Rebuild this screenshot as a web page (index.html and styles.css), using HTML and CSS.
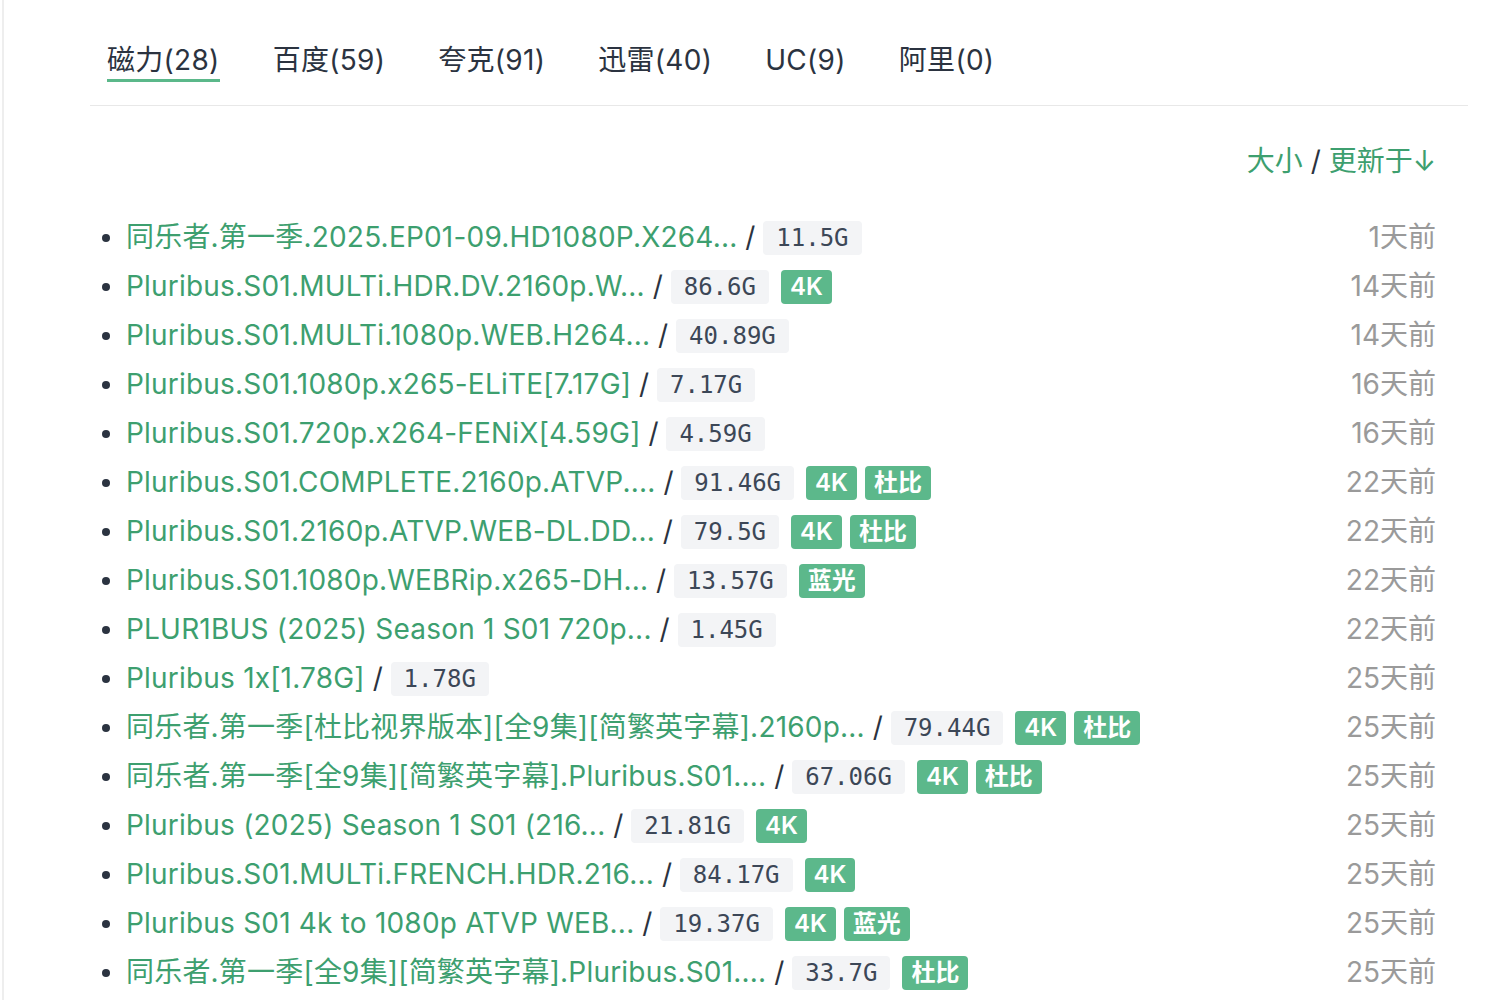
FILE: index.html
```html
<!DOCTYPE html>
<html lang="zh-CN">
<head>
    <meta charset="UTF-8">
    <meta name="viewport" content="width=device-width, initial-scale=1.0">
    <title>资源列表</title>
    <link rel="stylesheet" href="styles.css">
</head>
<body>

    <div class="panel">
        <!-- 网盘分类 -->
        <div class="tabs">
            <span class="tab active">磁力(28)</span>
            <span class="tab">百度(59)</span>
            <span class="tab">夸克(91)</span>
            <span class="tab">迅雷(40)</span>
            <span class="tab">UC(9)</span>
            <span class="tab">阿里(0)</span>
        </div>

        <div class="sort">
            <a href="#">大小</a> / <a href="#">更新于↓</a>
        </div>

        <ul class="list">
            <li><div class="info"><a href="#">同乐者.第一季.2025.EP01-09.HD1080P.X264...</a> / <span class="size">11.5G</span></div><span class="date">1天前</span></li>
            <li><div class="info"><a href="#">Pluribus.S01.MULTi.HDR.DV.2160p.W...</a> / <span class="size">86.6G</span><span class="tag">4K</span></div><span class="date">14天前</span></li>
            <li><div class="info"><a href="#">Pluribus.S01.MULTi.1080p.WEB.H264...</a> / <span class="size">40.89G</span></div><span class="date">14天前</span></li>
            <li><div class="info"><a href="#">Pluribus.S01.1080p.x265-ELiTE[7.17G]</a> / <span class="size">7.17G</span></div><span class="date">16天前</span></li>
            <li><div class="info"><a href="#">Pluribus.S01.720p.x264-FENiX[4.59G]</a> / <span class="size">4.59G</span></div><span class="date">16天前</span></li>
            <li><div class="info"><a href="#">Pluribus.S01.COMPLETE.2160p.ATVP....</a> / <span class="size">91.46G</span><span class="tag">4K</span><span class="tag">杜比</span></div><span class="date">22天前</span></li>
            <li><div class="info"><a href="#">Pluribus.S01.2160p.ATVP.WEB-DL.DD...</a> / <span class="size">79.5G</span><span class="tag">4K</span><span class="tag">杜比</span></div><span class="date">22天前</span></li>
            <li><div class="info"><a href="#">Pluribus.S01.1080p.WEBRip.x265-DH...</a> / <span class="size">13.57G</span><span class="tag">蓝光</span></div><span class="date">22天前</span></li>
            <li><div class="info"><a href="#">PLUR1BUS (2025) Season 1 S01 720p...</a> / <span class="size">1.45G</span></div><span class="date">22天前</span></li>
            <li><div class="info"><a href="#">Pluribus 1x[1.78G]</a> / <span class="size">1.78G</span></div><span class="date">25天前</span></li>
            <li><div class="info"><a href="#">同乐者.第一季[杜比视界版本][全9集][简繁英字幕].2160p...</a> / <span class="size">79.44G</span><span class="tag">4K</span><span class="tag">杜比</span></div><span class="date">25天前</span></li>
            <li><div class="info"><a href="#">同乐者.第一季[全9集][简繁英字幕].Pluribus.S01....</a> / <span class="size">67.06G</span><span class="tag">4K</span><span class="tag">杜比</span></div><span class="date">25天前</span></li>
            <li><div class="info"><a href="#">Pluribus (2025) Season 1 S01 (216...</a> / <span class="size">21.81G</span><span class="tag">4K</span></div><span class="date">25天前</span></li>
            <li><div class="info"><a href="#">Pluribus.S01.MULTi.FRENCH.HDR.216...</a> / <span class="size">84.17G</span><span class="tag">4K</span></div><span class="date">25天前</span></li>
            <li><div class="info"><a href="#">Pluribus S01 4k to 1080p ATVP WEB...</a> / <span class="size">19.37G</span><span class="tag">4K</span><span class="tag">蓝光</span></div><span class="date">25天前</span></li>
            <li><div class="info"><a href="#">同乐者.第一季[全9集][简繁英字幕].Pluribus.S01....</a> / <span class="size">33.7G</span><span class="tag">杜比</span></div><span class="date">25天前</span></li>
        </ul>
    </div>

</body>
</html>
```

FILE: styles.css
```css
body {
    margin: 0;
    background-color: #fff;
    font-family: Inter, "Noto Sans CJK SC", sans-serif;
    color: #2b3340;
}

.panel {
    margin-left: 2px;
    border-left: 2px solid #eeeeee;
    padding: 40px 32px 0 86px;
    height: 1000px;
    box-sizing: border-box;
    overflow: hidden;
}

.tabs {
    display: flex;
    gap: 53px;
    padding: 0 0 0 17px;
    height: 65px;
    border-bottom: 1px solid #e8e8e8;
}

.tab {
    font-size: 28px;
    letter-spacing: 0.3px;
    line-height: 40px;
    height: 42px;
    color: #2b3340;
    box-sizing: border-box;
}

.tab.active {
    border-bottom: 3px solid #5bb88a;
}

.sort {
    text-align: right;
    font-size: 28px;
    line-height: 40px;
    margin: 35px 32px 0 0;
    color: #2b3340;
}

.sort a {
    color: #3d9f6f;
    text-decoration: none;
}

.list {
    list-style: none;
    margin: 32px 32px 0 0;
    padding: 0 0 0 12px;
    font-size: 28px;
}

.list li {
    display: flex;
    align-items: center;
    height: 49px;
    line-height: 49px;
}

.list li::before {
    content: "";
    width: 8px;
    height: 8px;
    border-radius: 50%;
    background-color: #2b3340;
    margin-right: 16px;
    flex-shrink: 0;
}

.info {
    display: flex;
    align-items: center;
    white-space: pre;
    flex: 1;
}

.info a {
    color: #3d9f6f;
    text-decoration: none;
    letter-spacing: 0.2px;
}

.size {
    font-family: "DejaVu Sans Mono", monospace;
    font-size: 24px;
    line-height: 34px;
    background-color: #f3f4f6;
    color: #3c4757;
    padding: 0 13px;
    border-radius: 4px;
    margin-right: 12px;
}

.tag {
    font-size: 24px;
    line-height: 34px;
    font-weight: 600;
    background-color: #5cb88b;
    color: #fff;
    padding: 0 9px;
    border-radius: 4px;
    margin-right: 8px;
}

.date {
    color: #9a9a9a;
}
```
